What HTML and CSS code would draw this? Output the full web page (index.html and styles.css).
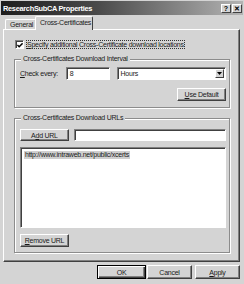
FILE: index.html
```html
<!DOCTYPE html>
<html>
<head>
<meta charset="utf-8">
<link rel="stylesheet" href="styles.css">
</head>
<body>
<div class="window">
  <div class="titlebar">
    <span class="title">ResearchSubCA Properties</span>
    <div class="tbtns">
      <span class="tbtn">?</span>
      <span class="tbtn">✕</span>
    </div>
  </div>
  <div class="tabs">
    <div class="tab">General</div>
    <div class="tab active">Cross-Certificates</div>
  </div>
  <div class="panel">
    <div class="checkrow">
      <span class="checkbox"><svg width="7" height="7" viewBox="0 0 7 7"><path d="M0.5 3 L2.5 5 L6.5 1" stroke="#000" stroke-width="1.6" fill="none"/></svg></span>
      <span class="checklabel"><u>S</u>pecify additional Cross-Certificate download locations</span>
    </div>
    <fieldset class="group g1">
      <legend>Cross-Certificates Download Interval</legend>
      <div class="row">
        <span class="lbl"><u>C</u>heck every:</span>
        <span class="input num">8</span>
        <span class="input combo"><span class="ctext">Hours</span><span class="carrow"><svg width="5" height="3" viewBox="0 0 5 3"><path d="M0 0 H5 L2.5 3 Z" fill="#000"/></svg></span></span>
      </div>
      <div class="rowright">
        <span class="btn usedef"><u>U</u>se Default</span>
      </div>
    </fieldset>
    <fieldset class="group g2">
      <legend>Cross-Certificates Download URLs</legend>
      <div class="row">
        <span class="btn addurl">A<u>d</u>d URL</span>
        <span class="input urlin"></span>
      </div>
      <div class="list"><span class="item">http://www.intraweb.net/public/xcerts</span></div>
      <span class="btn remurl"><u>R</u>emove URL</span>
    </fieldset>
  </div>
  <div class="footer">
    <span class="btn fbtn ok">OK</span>
    <span class="btn fbtn cancel">Cancel</span>
    <span class="btn fbtn apply"><u>A</u>pply</span>
  </div>
</div>
</body>
</html>
```
FILE: styles.css
```css
html, body {
  margin: 0;
  padding: 0;
  background: #d4d4d4;
}
body {
  font-family: "Liberation Sans", Arial, sans-serif;
  font-size: 7px;
  letter-spacing: -0.25px;
  color: #1a1a1a;
}
u { text-decoration: underline; text-underline-offset: 1px; }
.window {
  width: 244px;
  height: 284px;
  background: #d4d4d4;
  display: flex;
  flex-direction: column;
  overflow: hidden;
}
.titlebar {
  height: 14px;
  margin: 1px 1px 0 1px;
  background: linear-gradient(to right, #1e1e1e 0%, #4a4a4a 40%, #b4b4b4 100%);
  display: flex;
  align-items: center;
  justify-content: space-between;
  box-sizing: border-box;
  padding: 0 1px 0 2px;
}
.title {
  color: #fff;
  font-weight: bold;
  font-size: 7.4px;
  letter-spacing: -0.3px;
}
.tbtns { display: flex; gap: 0; }
.tbtn {
  width: 10px;
  height: 9px;
  box-sizing: border-box;
  background: #d4d4d4;
  border: 1px solid;
  border-color: #fff #404040 #404040 #fff;
  font-size: 7px;
  font-weight: bold;
  line-height: 7px;
  text-align: center;
  color: #000;
  letter-spacing: 0;
}
.tbtn + .tbtn { margin-left: 1px; }
.tabs {
  display: flex;
  align-items: flex-end;
  height: 14px;
  padding-left: 5px;
  position: relative;
  z-index: 1;
}
.tab {
  height: 10px;
  box-sizing: border-box;
  border: 1px solid;
  border-color: #fff #404040 transparent #fff;
  border-bottom: none;
  border-radius: 2px 2px 0 0;
  padding: 0 0 0 4px;
  line-height: 9px;
  white-space: nowrap;
  background: #d4d4d4;
}
.tab:first-child { width: 31px; border-right-color: #808080; }
.tab.active {
  width: 58px;
  height: 14px;
  margin-bottom: -1px;
  margin-left: -1px;
  line-height: 11px;
  padding-left: 4px;
}
.panel {
  margin: 0 4px 0 3px;
  height: 233px;
  box-sizing: border-box;
  border: 1px solid;
  border-color: #fff #404040 #404040 #fff;
  box-shadow: inset -1px -1px #808080;
  padding: 0 9px 0 10px;
  display: flex;
  flex-direction: column;
}
.checkrow {
  display: flex;
  align-items: center;
  margin-top: 10px;
  height: 9px;
}
.checkbox {
  width: 9px;
  height: 9px;
  box-sizing: border-box;
  background: #fff;
  border: 1px solid;
  border-color: #808080 #fff #fff #808080;
  box-shadow: inset 1px 1px #404040;
  display: flex;
  align-items: center;
  justify-content: center;
  margin-left: 1px;
}
.checkbox svg { margin-left: 1px; margin-top: 1px; }
.checklabel {
  margin-left: 2px;
  padding: 0 1px;
  outline: 1px dotted #333;
  outline-offset: -1px;
  line-height: 9px;
  white-space: nowrap;
}
.group {
  margin: 0;
  padding: 0 3px 5px 5px;
  border: 1px solid #8c8c8c;
  box-shadow: inset 1px 1px #fff, 1px 1px #fff;
  min-width: 0;
}
.group legend {
  padding: 0 2px;
  margin-left: 1px;
  line-height: 8px;
  background: #d4d4d4;
}
.g1 { margin-top: 6px; height: 53px; box-sizing: border-box; }
.g2 { margin-top: 6px; height: 139px; box-sizing: border-box; }
.row {
  display: flex;
  align-items: center;
}
.g1 .row { margin-top: 4px; }
.lbl { width: 46px; white-space: nowrap; }
.input {
  box-sizing: border-box;
  height: 13px;
  background: #fff;
  border: 1px solid;
  border-color: #808080 #fff #fff #808080;
  box-shadow: inset 1px 1px #404040;
  display: flex;
  align-items: center;
  padding-left: 3px;
}
.num { width: 44px; }
.combo {
  width: 110px;
  margin-left: 7px;
  justify-content: space-between;
  padding-right: 1px;
}
.carrow {
  width: 9px;
  height: 9px;
  box-sizing: border-box;
  background: #d4d4d4;
  border: 1px solid;
  border-color: #fff #404040 #404040 #fff;
  display: flex;
  align-items: center;
  justify-content: center;
}
.rowright {
  display: flex;
  justify-content: flex-end;
  margin-top: 8px;
}
.btn {
  box-sizing: border-box;
  height: 13px;
  background: #d4d4d4;
  border: 1px solid;
  border-color: #fff #404040 #404040 #fff;
  box-shadow: inset -1px -1px #808080;
  display: flex;
  align-items: center;
  justify-content: center;
  white-space: nowrap;
}
.usedef { width: 49px; }
.g2 .row { margin-top: 7px; }
.addurl { width: 49px; height: 12px; }
.urlin { width: 153px; margin-left: 5px; height: 12px; }
.list {
  margin-top: 6px;
  height: 81px;
  box-sizing: border-box;
  background: #fff;
  border: 1px solid;
  border-color: #808080 #fff #fff #808080;
  box-shadow: inset 1px 1px #404040;
  padding: 3px 3px;
}
.item {
  display: inline-block;
  padding: 0 1px;
  background: #cfcfcf;
  color: #1a1a1a;
  line-height: 8px;
}
.remurl { width: 49px; margin-top: 6px; }
.footer {
  display: flex;
  margin-top: 3px;
  padding-left: 97px;
}
.fbtn { height: 14px; }
.ok { width: 49px; border: 1px solid #000; box-shadow: inset 1px 1px #fff, inset -1px -1px #404040, inset -2px -2px #808080; }
.cancel { width: 45px; margin-left: 1px; }
.apply { width: 45px; margin-left: 3px; }
```
